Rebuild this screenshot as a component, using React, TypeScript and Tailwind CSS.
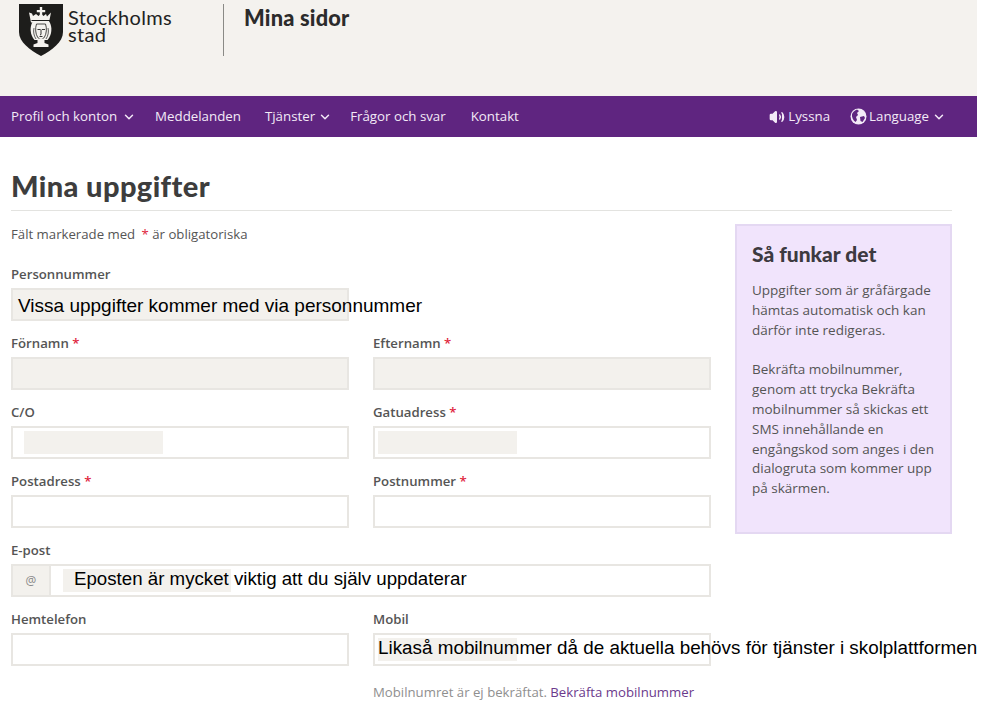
import { ChevronDown, Volume2 } from 'lucide-react';
import { ReactNode } from 'react';

function Crest() {
  return (
    <svg width="44" height="52" viewBox="0 0 44 52" className="shrink-0">
      <path d="M0 0H44V28C44 38 33 46 22 52C11 46 0 38 0 28Z" fill="#1d1d1b" />
      {/* crown */}
      <path d="M20.800 3h2.400v3h3v2.200h-3V11h-2.400V8.200h-3V6h3Z" fill="#f4f2ee" />
      <path d="M10 8.500l3 1 1 2.500 3-2 2.500 2 2.500-2.500 2.500 2.500 2.500-2 1 2.500 4-4-2 10H12Z" fill="#f4f2ee" />
      <path d="M12.500 16h19v1H12.500Z" fill="#1d1d1b" />
      {/* hair */}
      <path d="M13.500 18h17c3 5 2.500 13-2 18H15.500c-4.500-5-5-13-2-18Z" fill="#f4f2ee" />
      <path d="M15 24c-1 4 0 8 2 11M29 24c1 4 0 8-2 11" stroke="#1d1d1b" strokeWidth=".7" fill="none" />
      {/* face */}
      <path d="M17.500 20h9c1.500 4 1 10-1 13-1 1.500-2.200 2.500-3.500 2.500s-2.500-1-3.500-2.500c-2-3-2.500-9-1-13Z" fill="#f4f2ee" stroke="#1d1d1b" strokeWidth=".8" />
      <path d="M18.500 25.500h3M23 25.500h3M22 25.500v5l-1 .5M20.500 32.500h3" stroke="#1d1d1b" strokeWidth=".9" fill="none" />
      {/* neck */}
      <path d="M18.500 35h7v4l4 1.500V43h-15v-2.500l4-1.500Z" fill="#f4f2ee" />
    </svg>
  );
}

function Globe() {
  return (
    <svg width="17" height="17" viewBox="0 0 17 17" className="shrink-0">
      <circle cx="8.500" cy="8.500" r="8" fill="#f3eaf7" />
      <path d="M2 6c1-2 3-4 5-4.500L9 3 7 5 8 7 6 9 7 12 5.500 14C3 12.500 1.500 9 2 6ZM10 9l4-1 1 2-2.500 4-2-1Z" fill="#5f2580" />
    </svg>
  );
}

function NavItem({ label, caret, className }: { label: string; caret?: boolean; className?: string }) {
  return (
    <a className={`flex items-center ${className ?? ''}`}>
      {label}
      {caret && <ChevronDown size={14} strokeWidth={2.500} className="ml-[var(--caret-gap)]" />}
    </a>
  );
}

function Field({
  label,
  required,
  disabled,
  children,
}: {
  label: string;
  required?: boolean;
  disabled?: boolean;
  children?: ReactNode;
}) {
  return (
    <div className="w-[338px]">
      <div className="h-[20px] text-[13.200px] leading-[20px] font-semibold text-[#555]">
        {label}
        {required && <span className="text-[#e0243c]"> *</span>}
      </div>
      <div
        className={`mt-[4px] flex h-[33px] items-center border-2 border-[#e8e6e2] whitespace-nowrap ${
          disabled ? 'bg-[#f3f1ed]' : 'bg-white'
        }`}
      >
        {children}
      </div>
    </div>
  );
}

const note = 'font-["Liberation_Sans",Arial,sans-serif] text-black';

export default function App() {
  return (
    <div className="h-[722px] w-[1001px] overflow-hidden bg-white font-['Open_Sans',sans-serif] text-[#555]">
      <div className="w-[977px]">
        {/* Header */}
        <header className="flex h-[96px] items-start bg-[#f4f2ee] pt-[4px] pl-[19px]">
          <Crest />
          <div className="mt-[5px] ml-[5px] w-[155px] font-['Lato',sans-serif] text-[20px] leading-[17px] tracking-[0.3px] text-[#222]">
            Stockholms
            <br />
            stad
          </div>
          <div className="h-[52px] w-[1px] bg-[#8a8a86]" />
          <div className="ml-[20px] font-['Lato',sans-serif] text-[21.800px] leading-[28px] font-black tracking-[0.2px] text-[#2b2b2b]">
            Mina sidor
          </div>
        </header>

        {/* Nav */}
        <nav className="flex h-[41px] items-center bg-[#5f2580] pr-[31px] pl-[11px] text-[13.300px] text-[#f3eaf7]">
          <NavItem label="Profil och konton" caret className="mr-[19px] [--caret-gap:5px]" />
          <NavItem label="Meddelanden" className="mr-[24px]" />
          <NavItem label="Tjänster" caret className="mr-[18px] [--caret-gap:3px]" />
          <NavItem label="Frågor och svar" className="mr-[25px]" />
          <NavItem label="Kontakt" />
          <a className="ml-auto flex items-center gap-[3px]">
            <Volume2 size={16} fill="currentColor" />
            Lyssna
          </a>
          <a className="ml-[20px] flex items-center gap-[2px]">
            <Globe />
            <span className="mr-[1px]">Language</span>
            <ChevronDown size={14} strokeWidth={2.500} />
          </a>
        </nav>
      </div>

      {/* Content */}
      <main className="w-[952px] pl-[11px]">
        <h1 className="mt-[32px] h-[42px] border-b border-[#e3e3e0] font-['Lato',sans-serif] text-[29px] leading-[34px] font-black tracking-[0.4px] text-[#3d3d3d]">
          Mina uppgifter
        </h1>

        <div className="flex justify-between">
          <form className="w-[700px]">
            <p className="mt-[13px] h-[20px] text-[13.200px] leading-[20px]">
              Fält markerade med <span className="ml-[3px] text-[#e0243c]">*</span> är obligatoriska
            </p>

            <div className="mt-[20px]">
              <Field label="Personnummer" disabled>
                <span className={`${note} mt-[3px] ml-[5px] text-[19px]`}>
                  Vissa uppgifter kommer med via personnummer
                </span>
              </Field>
            </div>

            <div className="mt-[12px] flex justify-between">
              <Field label="Förnamn" required disabled />
              <Field label="Efternamn" required disabled />
            </div>

            <div className="mt-[12px] flex justify-between">
              <Field label="C/O">
                <div className="ml-[11px] h-[23px] w-[139px] bg-[#f3f1ed]" />
              </Field>
              <Field label="Gatuadress" required>
                <div className="ml-[3px] h-[23px] w-[139px] bg-[#f3f1ed]" />
              </Field>
            </div>

            <div className="mt-[12px] flex justify-between">
              <Field label="Postadress" required />
              <Field label="Postnummer" required />
            </div>

            <div className="mt-[12px]">
              <div className="h-[20px] text-[13.200px] leading-[20px] font-semibold text-[#555]">E-post</div>
              <div className="mt-[4px] flex h-[33px] items-center border-2 border-[#e8e6e2] bg-white whitespace-nowrap">
                <div className="flex h-full w-[38px] items-center justify-center border-r-2 border-[#e8e6e2] bg-[#f3f1ed] text-[12px] text-[#888]">
                  @
                </div>
                <div className="relative ml-[12px] h-[23px] w-[168px] bg-[#f3f1ed]">
                  <span className={`${note} absolute top-[-4px] left-[11px] text-[18.700px]`}>
                    Eposten är mycket viktig att du själv uppdaterar
                  </span>
                </div>
              </div>
            </div>

            <div className="mt-[12px] flex justify-between">
              <Field label="Hemtelefon" />
              <div className="w-[338px]">
                <Field label="Mobil">
                  <div className="relative ml-[3px] h-[23px] w-[139px] bg-[#f3f1ed]">
                    <span className={`${note} absolute top-[-4px] left-[0px] text-[18.850px]`}>
                      Likaså mobilnummer då de aktuella behövs för tjänster i skolplattformen
                    </span>
                  </div>
                </Field>
                <p className="mt-[16px] text-[13.200px] leading-[20px] whitespace-nowrap text-[#8f8f8f]">
                  Mobilnumret är ej bekräftat. <a className="text-[#6b3a8c]">Bekräfta mobilnummer</a>
                </p>
              </div>
            </div>
          </form>

          {/* Sidebar */}
          <aside className="mt-[13px] h-[310px] w-[217px] border-2 border-[#e4d8f2] bg-[#f1e4fc] px-[15px] pt-[15px]">
            <h2 className="font-['Lato',sans-serif] text-[21px] leading-[26px] font-black text-[#3d3a40]">
              Så funkar det
            </h2>
            <p className="mt-[14px] text-[13.500px] leading-[19.800px]">
              Uppgifter som är gråfärgade hämtas automatisk och kan därför inte redigeras.
            </p>
            <p className="mt-[20px] text-[13.500px] leading-[19.800px]">
              Bekräfta mobilnummer, genom att trycka Bekräfta mobilnummer så skickas ett SMS innehållande en
              engångskod som anges i den dialogruta som kommer upp på skärmen.
            </p>
          </aside>
        </div>
      </main>
    </div>
  );
}
